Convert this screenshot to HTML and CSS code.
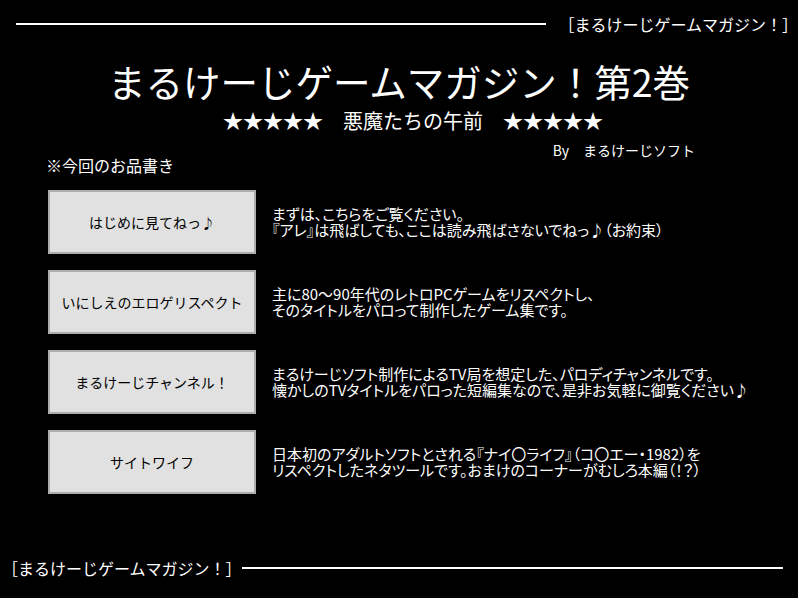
FILE: index.html
```html
<!DOCTYPE html>
<html lang="ja">
<head>
<meta charset="utf-8">
<title>まるけーじゲームマガジン！第2巻</title>
<link rel="stylesheet" href="styles.css">
</head>
<body>
<div class="page">
  <div class="topbar">
    <div class="rule"></div>
    <div class="label">［まるけーじゲームマガジン！］</div>
  </div>
  <h1 class="title">まるけーじゲームマガジン！第2巻</h1>
  <div class="subtitle">★★★★★　悪魔たちの午前　★★★★★</div>
  <div class="by">By　まるけーじソフト</div>
  <div class="caption">※今回のお品書き</div>
  <div class="menu">
    <div class="row">
      <div class="btn">はじめに見てねっ♪</div>
      <div class="desc">まずは、こちらをご覧ください。<br>『アレ』は飛ばしても、ここは読み飛ばさないでねっ♪（お約束）</div>
    </div>
    <div class="row">
      <div class="btn">いにしえのエロゲリスペクト</div>
      <div class="desc">主に80～90年代のレトロPCゲームをリスペクトし、<br>そのタイトルをパロって制作したゲーム集です。</div>
    </div>
    <div class="row">
      <div class="btn">まるけーじチャンネル！</div>
      <div class="desc">まるけーじソフト制作によるTV局を想定した、パロディチャンネルです。<br>懐かしのTVタイトルをパロった短編集なので、是非お気軽に御覧ください♪</div>
    </div>
    <div class="row">
      <div class="btn">サイトワイフ</div>
      <div class="desc">日本初のアダルトソフトとされる『ナイ〇ライフ』（コ〇エー・1982）を<br>リスペクトしたネタツールです。おまけのコーナーがむしろ本編（！？）</div>
    </div>
  </div>
  <div class="bottombar">
    <div class="label">［まるけーじゲームマガジン！］</div>
    <div class="rule"></div>
  </div>
</div>
</body>
</html>
```
FILE: styles.css
```css
html, body {
  margin: 0;
  padding: 0;
  background: #000;
}
body {
  color: #fff;
  font-family: "Noto Sans CJK JP", "Noto Sans", sans-serif;
}
.page {
  width: 798px;
  height: 598px;
  display: flex;
  flex-direction: column;
  overflow: hidden;
}
.topbar {
  height: 48px;
  display: flex;
  align-items: center;
  gap: 12px;
  padding: 0 0 0 16px;
}
.bottombar {
  margin-top: auto;
  margin-bottom: 20px;
  height: 20px;
  display: flex;
  align-items: center;
  gap: 0;
  padding: 0 15px 0 2px;
}
.rule {
  flex: 1;
  height: 2px;
  background: #fff;
}
.label {
  font-size: 16px;
  line-height: 20px;
  white-space: nowrap;
}
.title {
  margin: 11px 0 0;
  font-size: 37.5px;
  font-weight: normal;
  line-height: 44px;
  text-align: center;
}
.subtitle {
  margin-top: 5px;
  padding-left: 28px;
  font-size: 20px;
  line-height: 26px;
  text-align: center;
}
.by {
  margin-top: 9px;
  font-size: 14px;
  line-height: 14px;
  text-align: right;
  padding-right: 103px;
}
.caption {
  padding-left: 46px;
  font-size: 16px;
  line-height: 16px;
}
.menu {
  margin-top: 17px;
  padding-left: 48px;
  display: flex;
  flex-direction: column;
  gap: 16px;
}
.row {
  display: flex;
  align-items: center;
  gap: 16px;
}
.btn {
  box-sizing: border-box;
  width: 208px;
  height: 64px;
  background: #e1e1e1;
  border: 2px solid #adadad;
  color: #000;
  font-size: 14px;
  display: flex;
  align-items: center;
  justify-content: center;
}
.desc {
  font-size: 15px;
  line-height: 16px;
  white-space: nowrap;
  font-feature-settings: "palt";
}
```
